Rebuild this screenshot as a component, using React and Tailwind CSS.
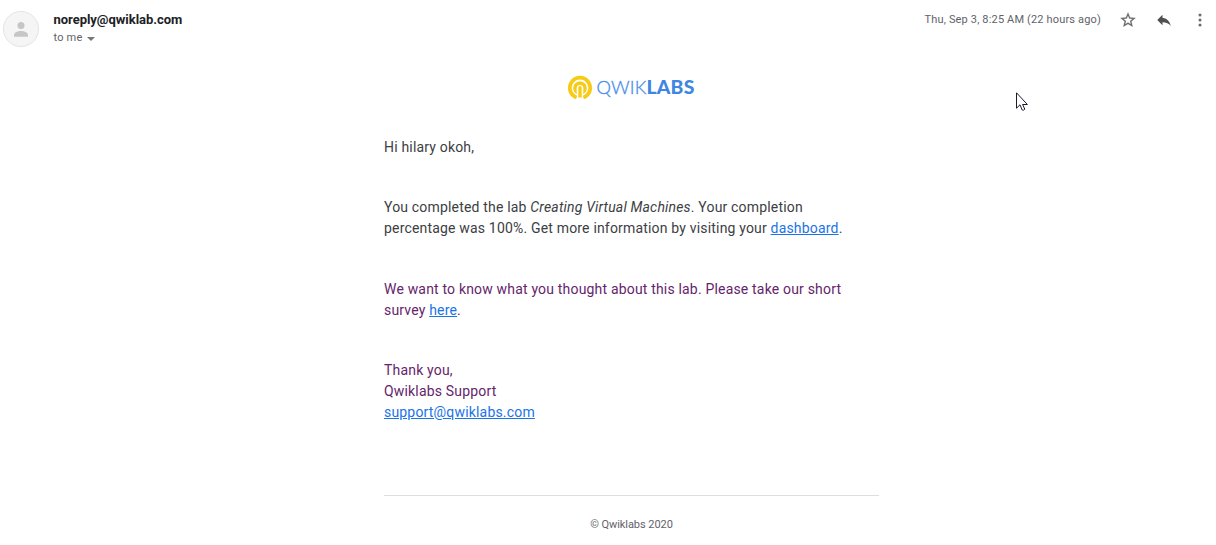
import React from "react";

function Avatar() {
  return (
    <svg className="mt-[10px] ml-[2px] size-[38px] shrink-0" viewBox="0 0 38 38">
      <circle cx="19" cy="19" r="17.6" fill="#f5f5f5" stroke="#dedede" strokeWidth="0.8" />
      <circle cx="19" cy="15.5" r="3.5" fill="#c6c6c6" />
      <path d="M12 26.7v-1.8c0-2.5 4.4-3.9 7-3.9s7 1.4 7 3.9v1.8z" fill="#c6c6c6" />
    </svg>
  );
}

function Header() {
  return (
    <header className="flex h-[60px] justify-between">
      <div className="flex">
        <Avatar />
        <div className="ml-[13.5px] flex flex-col pt-[10px]">
          <span className="h-[19px] text-[13px] leading-[19px] font-bold tracking-[-0.03px] whitespace-nowrap text-[#202124]">
            noreply@qwiklab.com
          </span>
          <div className="flex h-[18px] items-center text-[11px] leading-[18px] tracking-[0.2px] text-[#5f6368]">
            <span>to me</span>
            <svg className="mt-[1px] ml-[5px] h-1 w-2" viewBox="0 0 8 4">
              <path d="M0 0h8L4 4z" fill="#777" />
            </svg>
          </div>
        </div>
      </div>
      <div className="flex h-10 items-center">
        <span className="text-[11px] leading-[18px] tracking-[0.16px] whitespace-nowrap text-[#5f6368]">
          Thu, Sep 3, 8:25 AM (22 hours ago)
        </span>
        <svg className="ml-[18px] size-[18px]" viewBox="0 0 24 24" fill="#6b6b6b" stroke="#6b6b6b" strokeWidth="0.3">
          <path d="M22 9.24l-7.19-.62L12 2 9.19 8.63 2 9.24l5.46 4.73L5.82 21 12 17.27 18.18 21l-1.63-7.03L22 9.24zM12 15.4l-3.76 2.27 1-4.28-3.32-2.88 4.38-.38L12 6.1l1.71 4.04 4.38.38-3.32 2.88 1 4.28L12 15.4z" />
        </svg>
        <svg className="ml-[18px] size-[18px]" viewBox="0 0 24 24" fill="#4f4f4f">
          <path d="M10 9V5l-7 7 7 7v-4.1c5 0 8.5 1.6 11 5.1-1-5-4-10-11-11z" />
        </svg>
        <svg className="mr-[7px] ml-[18px] size-[18px]" viewBox="0 0 18 18" fill="#6b6b6b">
          <circle cx="9" cy="3.9" r="1.5" />
          <circle cx="9" cy="9" r="1.5" />
          <circle cx="9" cy="14.1" r="1.5" />
        </svg>
      </div>
    </header>
  );
}

function Logo() {
  return (
    <svg className="h-[26px] w-[130px]" viewBox="0 0 130 26" role="img" aria-label="Qwiklabs">
      <path d="M9.6 22.5A10.2 10.2 0 1 1 16.4 22.5" fill="none" stroke="#f6cc17" strokeWidth="3.8" />
      <path d="M9.7 19.2A6.9 6.9 0 1 1 16.3 19.2V13.3a3.3 3.3 0 0 0-6.6 0z" fill="#f6cc17" />
      <path d="M11.3 22.6V12.7a1.7 1.7 0 0 1 3.4 0v9.9z" fill="#f6cc17" />
      <text x="29.5" y="18.5" fontFamily="Lato, sans-serif" fontSize="18.5" fontWeight="300" fill="#4a8ee8" stroke="#4a8ee8" strokeWidth="0.35" textLength="50" lengthAdjust="spacingAndGlyphs">
        QWIK
      </text>
      <text x="79.5" y="18.5" fontFamily="Lato, sans-serif" fontSize="18.5" fontWeight="900" fill="#3f86e4" textLength="48" lengthAdjust="spacingAndGlyphs">
        LABS
      </text>
    </svg>
  );
}

const linkClass = "text-[#1a73e8] underline";

export default function App() {
  return (
    <div className="relative h-[545px] w-[1216px] overflow-hidden bg-white font-['Roboto',sans-serif]">
      <Header />
      <main className="ml-[384px] w-[495px] text-[14px] leading-[21px] tracking-[0.18px] whitespace-nowrap text-[#3c4043]">
        <div className="flex h-[77px] justify-center pt-[15px]">
          <Logo />
        </div>
        <p>Hi hilary okoh,</p>
        <p className="mt-[39px]">
          You completed the lab <em>Creating Virtual Machines</em>. Your completion
          <br />
          percentage was 100%. Get more information by visiting your{" "}
          <a className={linkClass} href="#dashboard">dashboard</a>.
        </p>
        <div className="text-[#65246b]">
          <p className="mt-[40px]">
            We want to know what you thought about this lab. Please take our short
            <br />
            survey <a className={linkClass} href="#survey">here</a>.
          </p>
          <p className="mt-[39px]">
            Thank you,
            <br />
            Qwiklabs Support
            <br />
            <a className={linkClass} href="mailto:support@qwiklabs.com">support@qwiklabs.com</a>
          </p>
        </div>
        <footer className="mt-[72px] border-t border-[#dedede] pt-[18px] text-center text-[11px] tracking-[-0.06px] text-[#5f6368]">
          © Qwiklabs 2020
        </footer>
      </main>
      <svg className="absolute top-[92px] left-[1016px] h-[20px] w-[13px]" viewBox="0 0 13 20">
        <path d="M.5.8v15.4l3.5-3.4 2.2 5.2q1.4.8 2.6-.8l-2.2-4.7h4.8z" fill="#fff" stroke="#1d1b2b" strokeWidth="1" />
      </svg>
    </div>
  );
}
